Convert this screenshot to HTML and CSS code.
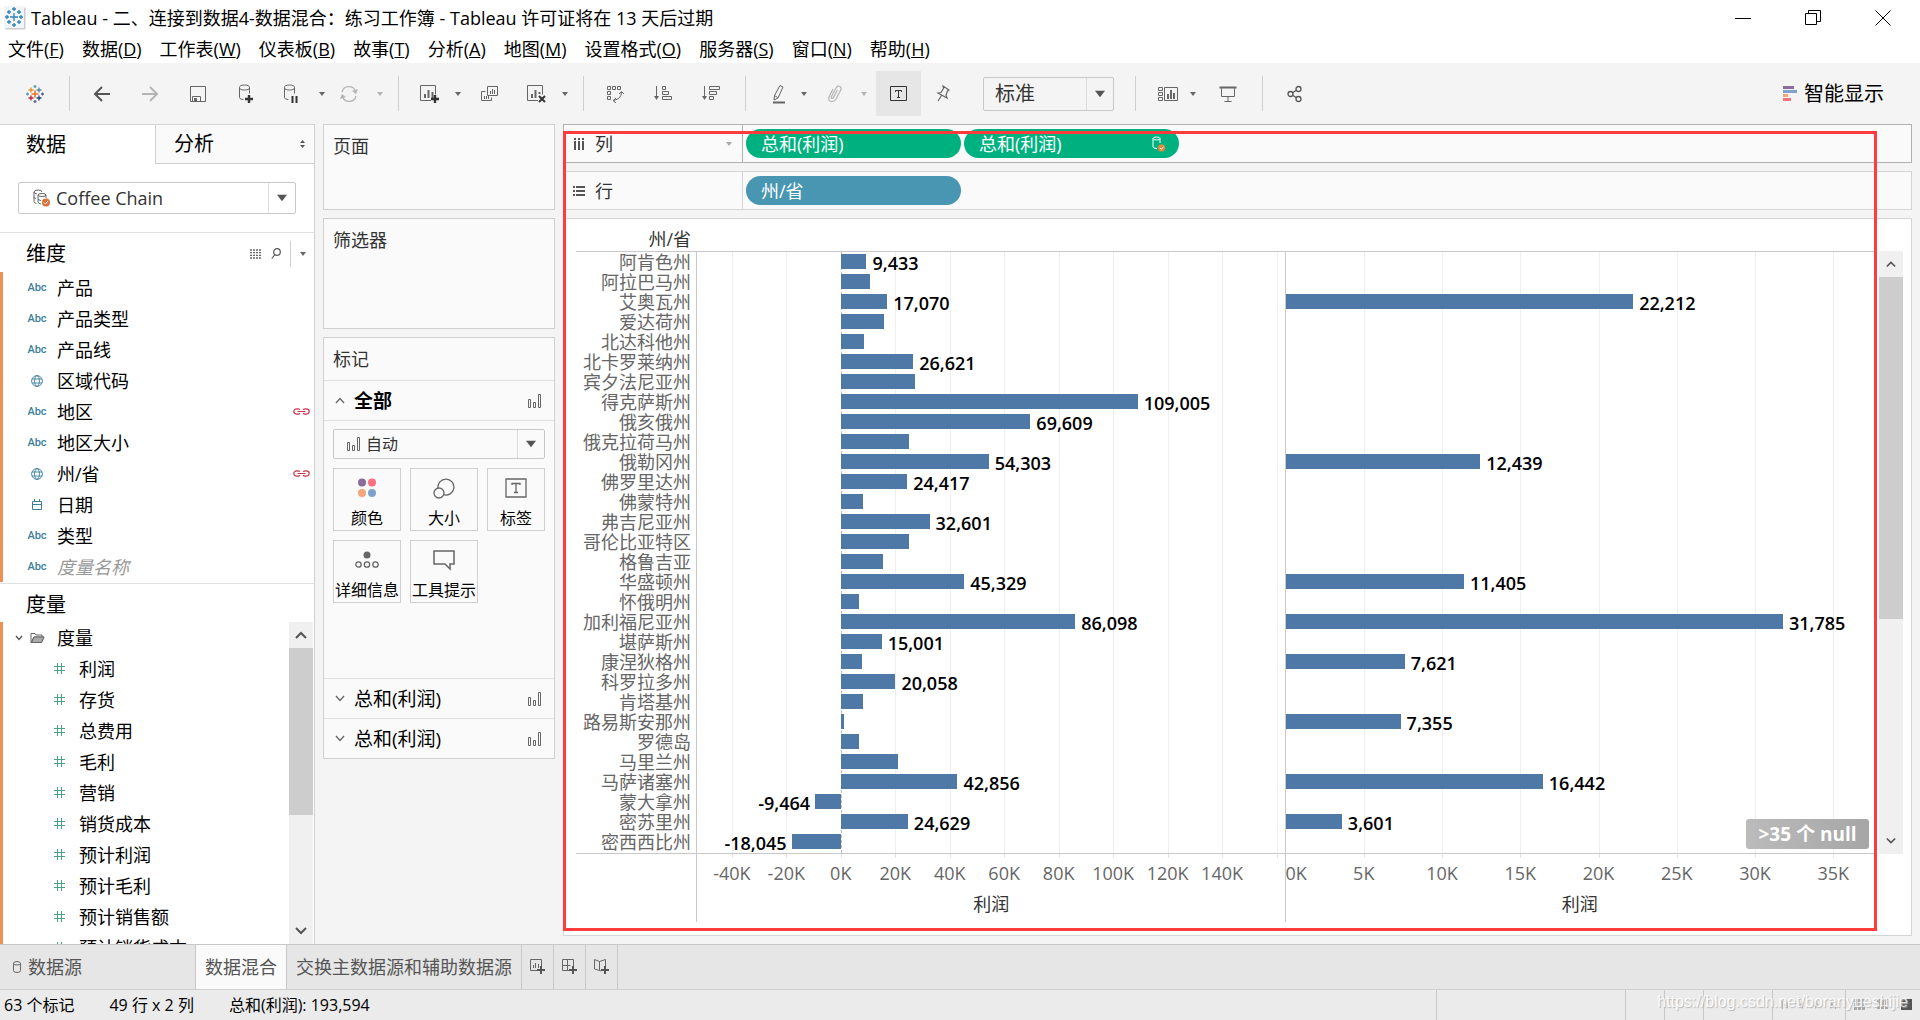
FILE: index.html
```html
<!DOCTYPE html>
<html lang="zh-CN">
<head>
<meta charset="utf-8">
<title>Tableau - 二、连接到数据4-数据混合：练习工作簿</title>
<link rel="stylesheet" href="styles.css">
</head>
<body>
<svg class="defs" aria-hidden="true">
  <symbol id="i-bars" viewBox="0 0 14 14"><path d="M.5 5.500h2v8h-2zM5.500 8.500h2v5h-2zM10.500 .5h2v13h-2z" fill="none" stroke="#666"/></symbol>
  <symbol id="i-globe" viewBox="0 0 12 12"><g fill="none" stroke="#3a7f9c" stroke-width=".9"><circle cx="6" cy="6" r="5.400"/><ellipse cx="6" cy="6" rx="2.400" ry="5.400"/><path d="M1 4h10M1 8h10"/></g></symbol>
  <symbol id="i-hash" viewBox="0 0 11 11"><path d="M3.500 0v11M7.500 0v11M0 3.500h11M0 7.500h11" fill="none" stroke="#4aa284"/></symbol>
  <symbol id="i-link" viewBox="0 0 17 7"><path d="M7 1.500Q6 .8 4 .8C2 .8 .8 2 .8 3.500S2 6.200 4 6.200 6 6 7 5.200M10 1.500Q11 .8 13 .8c2 0 3.200 1.200 3.200 2.700S15 6.200 13 6.200 11 6 10 5.200M4.500 3.500h8" fill="none" stroke="#c8364c" stroke-width="1.200"/></symbol>
  <symbol id="i-caret" viewBox="0 0 6 4"><path d="M0 0h6L3 4z" fill="currentColor"/></symbol>
  <symbol id="i-up" viewBox="0 0 12 8"><path d="M1 7l5-5 5 5" fill="none" stroke="currentColor" stroke-width="2"/></symbol>
  <symbol id="i-down" viewBox="0 0 12 8"><path d="M1 1l5 5 5-5" fill="none" stroke="currentColor" stroke-width="2"/></symbol>
  <symbol id="i-plus" viewBox="0 0 8 8"><path d="M4 0v8M0 4h8" stroke="#333" stroke-width="2.400"/></symbol>
</svg>

<header class="titlebar">
  <svg class="app-icon" width="22" height="24" viewBox="0 0 22 24"><rect x="1.500" y="1.500" width="20" height="22" fill="#ccc"/><rect width="20" height="22" fill="#f2f5f8"/><g stroke="#2e84b8" stroke-width="1.300"><path d="M10 7v8M6 11h8M10 1v4M8 3h4M10 17v4M8 19h4M1 11h4M3 9v4M15 11h4M17 9v4M5 4v4M3 6h4M15 4v4M13 6h4M5 14v4M3 16h4M15 14v4M13 16h4"/></g></svg>
  <h1 class="title">Tableau - 二、连接到数据4-数据混合：练习工作簿 - Tableau 许可证将在 13 天后过期</h1>
  <div class="window-buttons">
    <button aria-label="最小化"><svg width="16" height="16"><path d="M0 8.500h16" stroke="#000"/></svg></button>
    <button aria-label="还原"><svg width="16" height="16" fill="none" stroke="#000"><path d="M.5 3.500h11v11H.5zM3.500 3.500v-3h12v11h-4"/></svg></button>
    <button aria-label="关闭"><svg width="16" height="16"><path d="M.5 .5l15 15M15.500 .5l-15 15" stroke="#000"/></svg></button>
  </div>
</header>

<nav class="menu">
  <button>文件(<u>F</u>)</button><button>数据(<u>D</u>)</button><button>工作表(<u>W</u>)</button><button>仪表板(<u>B</u>)</button><button>故事(<u>T</u>)</button><button>分析(<u>A</u>)</button><button>地图(<u>M</u>)</button><button>设置格式(<u>O</u>)</button><button>服务器(<u>S</u>)</button><button>窗口(<u>N</u>)</button><button>帮助(<u>H</u>)</button>
</nav>

<div class="toolbar">
  <button aria-label="开始页"><svg width="18" height="18" viewBox="0 0 18 18" stroke-width="1.300"><path d="M9 5.500v7M5.500 9h7" stroke="#e8762c" stroke-width="1.600"/><path d="M5 2.500v5M2.500 5h5" stroke="#eb912c"/><path d="M13 2.500v5M10.500 5h5" stroke="#59879b"/><path d="M5 10.500v5M2.500 13h5" stroke="#c72035"/><path d="M13 10.500v5M10.500 13h5" stroke="#1f457e"/><path d="M9 0v3M7.500 1.500h3M1.500 7.500v3M0 9h3" stroke="#59a0b4"/><path d="M16.500 7.500v3M15 9h3M9 15v3M7.500 16.500h3" stroke="#5b6591"/></svg></button>
  <i class="sep"></i>
  <button aria-label="撤消"><svg width="18" height="16" fill="none" stroke="#555" stroke-width="2"><path d="M9 1L2 8l7 7M2 8h15"/></svg></button>
  <button aria-label="重做"><svg width="18" height="16" fill="none" stroke="#b4b4b4" stroke-width="2"><path d="M9 1l7 7-7 7M16 8H1"/></svg></button>
  <button aria-label="保存"><svg width="16" height="16" fill="none" stroke="#666"><path d="M.5 .5h15v15H.5zM2.500 15.500v-5h8v5"/><path d="M4 12h3v3H4z" fill="#666" stroke="none"/></svg></button>
  <button aria-label="新建数据源"><svg width="16" height="20" fill="none" stroke="#666"><ellipse cx="6.500" cy="3.500" rx="5" ry="2.500"/><path d="M1.500 3.500v10q0 2 4 2M11.500 3.500v6"/><use href="#i-plus" x="7" y="11" width="8" height="8"/></svg></button>
  <button aria-label="暂停自动更新"><svg width="16" height="20" fill="none" stroke="#666"><ellipse cx="7.500" cy="3.500" rx="5" ry="2.500"/><path d="M2.500 3.500v10q0 2 4 2M12.500 3.500v6"/><path d="M10.500 12v7M14.500 12v7" stroke="#333" stroke-width="2"/></svg></button>
  <button aria-label="更新选项"><svg class="caret"><use href="#i-caret"/></svg></button>
  <button aria-label="运行更新"><svg width="18" height="18" fill="none" stroke="#b4b4b4" stroke-width="1.300"><path d="M2 7a7 7 0 0 1 13.500-.5M16 11a7 7 0 0 1-13.500.5"/><path d="M18 4l-2 5-4-3zM0 14l2-5 4 3z" fill="#b4b4b4" stroke="none"/></svg></button>
  <button class="off" aria-label="运行选项"><svg class="caret"><use href="#i-caret"/></svg></button>
  <i class="sep"></i>
  <button aria-label="新建工作表"><svg width="20" height="20" fill="none" stroke="#666"><path d="M11 16.500H.5V1.500h15v9"/><path d="M5 10v4M8.500 6v8M12.500 8v6" stroke-width="2"/><use href="#i-plus" x="11" y="11" width="8" height="8"/></svg></button>
  <button aria-label="工作表选项"><svg class="caret"><use href="#i-caret"/></svg></button>
  <button aria-label="复制"><svg width="18" height="18" fill="none" stroke="#666"><path d="M6.500 1.500h10v9h-10zM4.500 6.500h-4v9h10v-3"/><path d="M9.500 6v3M11.500 4v5M13.500 5v4M3.500 11v3M5.500 11v3M7.500 11v3"/></svg></button>
  <button aria-label="清除工作表"><svg width="20" height="20" fill="none" stroke="#666"><path d="M11 16.500H.5V1.500h15v9"/><path d="M5 10v4M8.500 6v8M12.500 8v2" stroke-width="2"/><path d="M12 12l6 6M18 12l-6 6" stroke="#333" stroke-width="2"/></svg></button>
  <button aria-label="清除选项"><svg class="caret"><use href="#i-caret"/></svg></button>
  <i class="sep"></i>
  <button aria-label="交换行和列"><svg width="18" height="18" fill="none" stroke="#666"><path d="M1.500 1.500h3v3h-3zM6.500 1.500h3v3h-3zM11.500 1.500h3v3h-3zM1.500 6.500h3v3h-3zM1.500 11.500h3v3h-3zM15.500 7q0 7-8 8.500M13 9l2.500-2.500L18 9M10 13l-3 2.500L10 18"/></svg></button>
  <button aria-label="升序排序"><svg width="18" height="18" fill="none" stroke="#666"><path d="M2.500 1v12M8.500 1.500h3v3h-3zM8.500 6.500h6v3h-6zM8.500 11.500h9v3h-9z"/><path d="M0 11h5l-2.500 4z" fill="#666" stroke="none"/></svg></button>
  <button aria-label="降序排序"><svg width="18" height="18" fill="none" stroke="#666"><path d="M2.500 1v12M7.500 1.500h10v3h-10zM7.500 6.500h7v3h-7zM7.500 11.500h4v3h-4z"/><path d="M0 11h5l-2.500 4z" fill="#666" stroke="none"/></svg></button>
  <i class="sep"></i>
  <button aria-label="突出显示"><svg width="14" height="20" fill="none" stroke="#666"><path d="M8 1.500l3 1.500-5 11-4 2 .5-4.500zM2.500 11.500l3 2"/><path d="M1 18.500h12" stroke-width="2"/></svg></button>
  <button aria-label="突出显示选项"><svg class="caret"><use href="#i-caret"/></svg></button>
  <button aria-label="组成员"><svg width="14" height="18" fill="none" stroke="#b4b4b4" stroke-width="1.200"><path d="M9.500 5L5 13q-1.500 1-2-.5L8 3q2-3 4-1.500t.5 4L8 14q-2 3-5 2.500T1 12l4-8"/></svg></button>
  <button class="off" aria-label="组选项"><svg class="caret"><use href="#i-caret"/></svg></button>
  <button class="pressed" aria-label="显示标记标签" aria-pressed="true"><svg width="18" height="16" fill="none" stroke="#333"><path d="M.5 .5h16v14H.5z"/><path d="M5.500 6V4.500h6V6M8.500 4.500v7M7 11.500h3"/></svg></button>
  <button aria-label="固定轴"><svg width="14" height="18" fill="none" stroke="#666" stroke-width="1.200"><path d="M7 1l6 4-1.500 1L10 10l1 3-9-5 3-.5 2.500-4zM5.500 10.500L2 16"/></svg></button>
  <span class="combo fit"><select aria-label="适合"><option>标准</option></select><svg class="arrow"><use href="#i-caret"/></svg></span>
  <i class="sep"></i>
  <button aria-label="显示/隐藏卡"><svg width="20" height="16" fill="none" stroke="#666"><path d="M.5 1.500h4v3h-4zM.5 6.500h4v3h-4zM.5 11.500h4v3h-4zM6.500 1.500h13v13h-13z"/><path d="M10 8v5M13 4v9M16 7v6" stroke-width="2"/></svg></button>
  <button aria-label="卡选项"><svg class="caret"><use href="#i-caret"/></svg></button>
  <button aria-label="演示模式"><svg width="18" height="18" fill="none" stroke="#666"><path d="M.5 2.500h17" stroke-width="2"/><path d="M2.500 3v8.500h13V3M9 11.500v5M5.500 16.500h7"/></svg></button>
  <i class="sep"></i>
  <button aria-label="共享"><svg width="16" height="18" fill="none" stroke="#555" stroke-width="1.300"><circle cx="3.500" cy="9" r="2.500"/><circle cx="11.500" cy="4" r="2.500"/><circle cx="11.500" cy="14" r="2.500"/><path d="M5.500 7.700l4-2.400M5.500 10.300l4 2.400"/></svg></button>
  <button class="showme"><svg width="14" height="16"><path fill="#8a6d9b" d="M0 0h11v3H0z"/><path fill="#7fa2cc" d="M0 4h14v3H0z"/><path fill="#f2a679" d="M0 8h5v3H0z"/><path fill="#f9707f" d="M0 12h8v3H0z"/></svg>智能显示</button>
</div>

<main class="main">
  <section class="data-pane">
    <div class="pane-tabs"><button class="active">数据</button><button>分析<svg width="5" height="8"><path d="M0 3h5L2.500 0zM0 5h5L2.500 8z" fill="#555"/></svg></button></div>
    <div class="source">
      <span class="combo">
        <svg class="lead" width="18" height="18" fill="none" stroke="#666"><path d="M3.500 14.500q-2.500-.5-2.500-2V3q0-2 4-2t4 2M1 3q0 1.500 3 2M1 8q0 1 2 1.500"/><path d="M5 6q0-1.500 4-1.500T13 6v3M5 6q0 1.500 4 1.500T13 6M5 6v7q0 1.500 3 2M5 10q0 1 3 1.500"/><circle cx="13" cy="13.500" r="4" fill="#d9713a" stroke="none"/><path d="M11 13.500l1.500 1.500 2.500-3" stroke="#fff"/></svg>
        <select aria-label="数据源"><option>Coffee Chain</option></select><svg class="arrow"><use href="#i-caret"/></svg></span>
    </div>
    <div class="field-head">
      <h2>维度</h2>
      <svg width="12" height="10"><path d="M0 1h12M0 3.700h12M0 6.400h12M0 9h12" stroke="#666" stroke-width="1.300" stroke-dasharray="2 1"/></svg>
      <svg width="10" height="12" fill="none" stroke="#555" stroke-width="1.200"><circle cx="6" cy="4" r="3.300"/><path d="M4 6.500L.8 10.500"/></svg>
      <i class="sep small"></i>
      <svg class="caret"><use href="#i-caret"/></svg>
    </div>
    <ul class="fields">
      <li><span class="abc">Abc</span>产品</li>
      <li><span class="abc">Abc</span>产品类型</li>
      <li><span class="abc">Abc</span>产品线</li>
      <li><span class="abc"><svg width="12" height="12"><use href="#i-globe"/></svg></span>区域代码</li>
      <li><span class="abc">Abc</span>地区<svg class="link" width="17" height="7"><use href="#i-link"/></svg></li>
      <li><span class="abc">Abc</span>地区大小</li>
      <li><span class="abc"><svg width="12" height="12"><use href="#i-globe"/></svg></span>州/省<svg class="link" width="17" height="7"><use href="#i-link"/></svg></li>
      <li><span class="abc"><svg width="12" height="12" fill="none" stroke="#3a7f9c"><path d="M1.500 2.500h9v8h-9zM1.500 5.500h9M3.500 0v3M8.500 0v3"/></svg></span>日期</li>
      <li><span class="abc">Abc</span>类型</li>
      <li class="generated"><span class="abc">Abc</span>度量名称</li>
    </ul>
    <div class="field-head measures-head"><h2>度量</h2></div>
    <div class="measures">
      <ul class="fields">
        <li class="folder"><svg width="8" height="6" fill="none" stroke="#555" stroke-width="1.300"><path d="M1 1l3 3.500L7 1"/></svg><svg width="15" height="12" fill="none" stroke="#666"><path d="M1 10.500v-9h4l1 1.500h6v2M1 10.500h10.500l2.500-5.500H4z"/><path d="M4 5h10l-2.500 5.500H1.500z" fill="#aaa"/></svg>度量</li>
        <li class="num"><svg width="11" height="11"><use href="#i-hash"/></svg>利润</li>
        <li class="num"><svg width="11" height="11"><use href="#i-hash"/></svg>存货</li>
        <li class="num"><svg width="11" height="11"><use href="#i-hash"/></svg>总费用</li>
        <li class="num"><svg width="11" height="11"><use href="#i-hash"/></svg>毛利</li>
        <li class="num"><svg width="11" height="11"><use href="#i-hash"/></svg>营销</li>
        <li class="num"><svg width="11" height="11"><use href="#i-hash"/></svg>销货成本</li>
        <li class="num"><svg width="11" height="11"><use href="#i-hash"/></svg>预计利润</li>
        <li class="num"><svg width="11" height="11"><use href="#i-hash"/></svg>预计毛利</li>
        <li class="num"><svg width="11" height="11"><use href="#i-hash"/></svg>预计销售额</li>
        <li class="num"><svg width="11" height="11"><use href="#i-hash"/></svg>预计销货成本</li>
      </ul>
      <div class="scrollbar"><svg width="12" height="26"><use href="#i-up" width="12" height="8" y="9"/></svg><div class="track"><i></i></div><svg width="12" height="26"><use href="#i-down" width="12" height="8" y="9"/></svg></div>
    </div>
  </section>

  <section class="cards">
    <div class="card pages">页面</div>
    <div class="card filters">筛选器</div>
    <div class="card marks">
      <div class="marks-title">标记</div>
      <div class="mark-row all"><svg width="10" height="7" fill="none" stroke="#666" stroke-width="1.300"><path d="M1 6l4-4.500L9 6"/></svg><b>全部</b><svg width="14" height="14"><use href="#i-bars"/></svg></div>
      <div class="mark-body">
        <span class="combo"><svg class="lead" width="14" height="14"><use href="#i-bars"/></svg><select aria-label="标记类型"><option>自动</option></select><svg class="arrow"><use href="#i-caret"/></svg></span>
        <div class="mark-buttons">
          <button><svg width="22" height="22"><circle cx="6" cy="5.500" r="4" fill="#8a6d9b"/><circle cx="16" cy="5.500" r="4" fill="#f9707f"/><circle cx="6" cy="16" r="4" fill="#f2a679"/><circle cx="16" cy="16" r="4" fill="#7fa2cc"/></svg>颜色</button>
          <button><svg width="22" height="22" fill="none" stroke="#666" stroke-width="1.300"><path d="M5 11.200a8 8 0 1 1 5.500 6.500"/><circle cx="6" cy="16" r="5"/></svg>大小</button>
          <button><svg width="22" height="22" fill="none" stroke="#666" stroke-width="1.300"><path d="M1 2h20v18H1z"/><path d="M7 8V6.500h8V8M11 6.500v9M9 15.500h4"/></svg>标签</button>
          <button><svg width="24" height="22" fill="none" stroke="#666" stroke-width="1.300"><circle cx="12" cy="6" r="3.500" fill="#666" stroke="none"/><circle cx="3.500" cy="15.500" r="2.700"/><circle cx="12" cy="15.500" r="2.700"/><circle cx="20.500" cy="15.500" r="2.700"/></svg>详细信息</button>
          <button><svg width="22" height="22" fill="none" stroke="#666" stroke-width="1.500"><path d="M1 2h20v13h-4v5l-5-5H1z"/></svg>工具提示</button>
        </div>
      </div>
      <div class="mark-row"><svg width="10" height="7" fill="none" stroke="#666" stroke-width="1.300"><path d="M1 1l4 4.500L9 1"/></svg><span>总和(利润)</span><svg width="14" height="14"><use href="#i-bars"/></svg></div>
      <div class="mark-row"><svg width="10" height="7" fill="none" stroke="#666" stroke-width="1.300"><path d="M1 1l4 4.500L9 1"/></svg><span>总和(利润)</span><svg width="14" height="14"><use href="#i-bars"/></svg></div>
    </div>
  </section>

  <section class="work">
    <div class="shelf focus">
      <div class="shelf-head"><svg width="12" height="12" stroke="#555" stroke-width="2"><path d="M2 0v2M6 0v2M10 0v2M2 3v9M6 3v9M10 3v9"/></svg>列<svg class="caret"><use href="#i-caret"/></svg></div>
      <button class="pill green">总和(利润)</button>
      <button class="pill green">总和(利润)<svg width="14" height="16" fill="none" stroke="#fff"><path d="M5 12.500q-4-.3-4-1.500V2.500Q1 1 4.500 1T8 2.500V7M1 2.500Q1 4 4.500 4T8 2.500"/><circle cx="9.500" cy="12" r="3.700" fill="#d98a45" stroke="none"/><path d="M8 12l1.200 1.300L11.500 11"/></svg></button>
    </div>
    <div class="shelf">
      <div class="shelf-head"><svg width="12" height="12" stroke="#555" stroke-width="2"><path d="M0 2h2M0 6h2M0 10h2M3 2h9M3 6h9M3 10h9"/></svg>行</div>
      <button class="pill blue">州/省</button>
    </div>
    <div class="canvas">
      <div class="chart">
        <div class="row-title">州/省</div>
        <div class="body">
          <div class="grid grid-a"></div>
          <div class="grid grid-b"></div>
          <div class="rows"></div>
          <button class="nulls">&gt;35 个 null</button>
        </div>
        <div class="axes">
          <div class="axis-corner"></div>
          <div class="axis axis-a"><div class="ticks"></div>利润</div>
          <div class="axis axis-b"><div class="ticks"></div>利润</div>
        </div>
      </div>
      <div class="scrollbar"><svg width="12" height="26"><use href="#i-up" width="10" height="8" x="1" y="9"/></svg><div class="track"><i></i></div><svg width="12" height="26"><use href="#i-down" width="10" height="8" x="1" y="9"/></svg></div>
    </div>
    <div class="highlight-frame"></div>
  </section>
</main>

<nav class="sheets">
  <button class="ds"><svg width="8" height="13" fill="none" stroke="#666"><path d="M.5 2.500q0-2 3.500-2t3.500 2v7q0 2-3.500 2t-3.500-2zM.5 2.500q0 1.500 3.500 1.500t3.500-1.500"/></svg>数据源</button>
  <button class="active">数据混合</button>
  <button>交换主数据源和辅助数据源</button>
  <button class="add" aria-label="新建工作表"><svg width="16" height="16" fill="none" stroke="#666"><path d="M8 11.500H.5V.5h11v7M3.500 6v3M5.500 4v5M8.500 5v4"/><path d="M11 7v8M7 11h8" stroke="#555" stroke-width="2"/></svg></button>
  <button class="add" aria-label="新建仪表板"><svg width="16" height="16" fill="none" stroke="#666"><path d="M8 11.500H.5V.5h11v7M.5 6.500h8M5.500 .5v11"/><path d="M11 7v8M7 11h8" stroke="#555" stroke-width="2"/></svg></button>
  <button class="add" aria-label="新建故事"><svg width="16" height="16" fill="none" stroke="#666"><path d="M7 12L5.500 11.500 .5 10V.5L5.500 2.500 11.500 .5v7M5.500 2.500v9"/><path d="M11 7v8M7 11h8" stroke="#555" stroke-width="2"/></svg></button>
</nav>

<footer class="status">
  <span>63 个标记</span><span>49 行 x 2 列</span><span>总和(利润): 193,594</span>
  <div class="cells"><i></i><i></i><i></i><i></i>
    <i><svg width="56" height="10" fill="#b5b5b5"><path d="M1 1h1v8H1zM7 1v8L3 5zM22 1v8l-4-4zM34 1v8l4-4zM49 1v8l4-4zM54 1h1v8h-1z"/></svg></i>
    <i><svg width="58" height="12"><path d="M0 1.500h11M0 5.500h11M0 9.500h11M23 1.500h11M23 4.500h11M23 8.500h11" stroke="#aaa" stroke-width="3" stroke-dasharray="3 1"/><path d="M47 0h11v11H47z" fill="#555"/></svg></i>
  </div>
  <span class="watermark">https://blog.csdn.net/boranyueshijie</span>
</footer>
<script src="chart.js"></script>
</body>
</html>
```
FILE: styles.css
```css
* { box-sizing: border-box; }
body {
  margin: 0; height: 100vh; display: flex; flex-direction: column; overflow: hidden;
  font: 18px/24px "Open Sans", "Noto Sans CJK SC", sans-serif; color: #000; background: #fff;
}
button, select { font: inherit; color: inherit; border: 0; background: none; padding: 0; margin: 0; white-space: nowrap; }
ul { list-style: none; margin: 0; padding: 0; }
h1, h2 { margin: 0; font: inherit; }
svg { flex: none; display: block; }
.defs { position: absolute; width: 0; height: 0; }
.caret { width: 6px; height: 4px; color: #666; }
.off .caret { color: #b4b4b4; }
.sep { width: 1px; height: 35px; background: #cfcfcf; }

.titlebar { height: 35px; flex: none; display: flex; align-items: center; padding: 0 2px 0 4px; gap: 5px; }
.title { flex: 1; white-space: nowrap; }
.window-buttons { display: flex; }
.window-buttons button { width: 70px; height: 34px; display: grid; place-items: center; }

.menu { height: 28px; flex: none; display: flex; gap: 18px; padding-left: 8px; align-items: center; }

.toolbar {
  height: 61px; flex: none; background: #f4f4f4; display: grid; align-items: center; justify-items: center;
  grid-template-columns: 69px 1px 64px 32px 64px 32px 56px 8px 46px 16px 21px 42px 14px 50px 44px 12px 25px 38px 58px 38px 31px 36px 14px 48px 10px 59px 30px 156px 43px 22px 28px 42px 27px 38px 1fr;
  padding-right: 36px;
}
.toolbar .pressed { width: 45px; height: 45px; background: #e6e6e6; display: grid; place-items: center; }
.toolbar .showme { display: flex; align-items: center; gap: 7px; font-size: 20px; justify-self: end; }

.combo { display: flex; position: relative; border: 1px solid #c8c8c8; border-radius: 2px; align-items: center; background: inherit; }
.combo select { appearance: none; width: 100%; height: 100%; padding-left: 11px; color: #333; }
.combo .lead { position: absolute; left: 14px; }
.combo .arrow { position: absolute; right: 0; width: 27px; height: 100%; padding: 0 8px; border-left: 1px solid #dcdcdc; color: #555; pointer-events: none; }
.fit { width: 131px; height: 34px; justify-self: end; font-size: 20px; }

.main { flex: 1; min-height: 0; display: flex; gap: 8px; background: #f4f4f4; padding-right: 8px; }

.data-pane { width: 315px; flex: none; display: flex; flex-direction: column; background: #fff; border-right: 1px solid #d0d0d0; border-top: 1px solid #d4d4d4; }
.pane-tabs { display: grid; grid-template-columns: 155px 1fr; height: 39px; font-size: 20px; }
.pane-tabs button { text-align: left; padding-left: 26px; }
.pane-tabs button + button { display: flex; justify-content: space-between; align-items: center; padding: 0 9px 0 18px; background: #fafafa; border-left: 1px solid #d0d0d0; border-bottom: 1px solid #d0d0d0; }
.source { padding: 18px; height: 69px; border-bottom: 1px solid #e0e0e0; }
.source .combo { height: 32px; }
.source .combo select { padding-left: 37px; }
.field-head { height: 39px; flex: none; display: flex; align-items: center; padding: 3px 8px 0 26px; gap: 9px; }
.field-head h2 { font-size: 20px; flex: 1; }
.sep.small { height: 26px; }
.fields { border-left: 3px solid #ed9150; }
.fields li { height: 31px; display: flex; align-items: center; padding-left: 24px; white-space: nowrap; }
.abc { width: 20px; margin-right: 10px; display: grid; place-items: center; font: 500 11px/16px Roboto, sans-serif; color: #3a7f9c; }
.link { margin-left: auto; margin-right: 4px; }
.generated { font-style: italic; color: #999; }
.generated .abc { font-style: normal; }
.measures-head { border-top: 1px solid #e0e0e0; margin-top: 1px; height: 39px; }
.measures { flex: 1; min-height: 0; display: flex; overflow: hidden; padding-right: 1px; }
.measures .fields { flex: 1; }
.fields li.folder { padding-left: 12px; gap: 7px; }
.folder svg + svg { margin-right: 5px; }
.fields li.num { padding-left: 51px; gap: 14px; }

.scrollbar { width: 24px; flex: none; background: #f0f0f0; display: flex; flex-direction: column; align-items: center; color: #555; }
.track { flex: 1; width: 24px; }
.track i { display: block; height: 62%; background: #cdcdcd; }

.cards { width: 232px; flex: none; display: flex; flex-direction: column; gap: 8px; color: #333; }
.card { background: #fafafa; border: 1px solid #d0d0d0; padding: 9px; }
.pages { height: 86px; }
.filters { height: 111px; }
.marks { padding: 0; height: 422px; display: flex; flex-direction: column; }
.marks-title { height: 42px; padding: 9px; }
.mark-row { height: 40px; border-top: 1px solid #e0e0e0; display: flex; align-items: center; gap: 9px; padding: 0 12px 0 11px; color: #000; }
.mark-row b, .mark-row span { flex: 1; font-size: 19px; }
.mark-body { flex: 1; border-top: 1px solid #e0e0e0; padding: 8px 9px; font-size: 16px; }
.mark-body .combo { height: 30px; }
.mark-body .combo select { padding-left: 32px; }
.mark-body .combo .lead { left: 13px; }
.mark-buttons { display: grid; grid-template-columns: 68px 68px 58px; gap: 9px; margin-top: 9px; }
.mark-buttons button { height: 63px; border: 1px solid #d0d0d0; display: flex; flex-direction: column; align-items: center; justify-content: space-between; padding: 8px 0 0; color: #000; }

.work { flex: 1; min-width: 0; display: flex; flex-direction: column; gap: 8px; padding-bottom: 8px; position: relative; }
.shelf { height: 39px; flex: none; display: flex; align-items: center; gap: 3px; background: #fafafa; border: 1px solid #d4d4d4; }
.shelf.focus { border-color: #b0b0b0; }
.shelf-head { width: 179px; height: 100%; border-right: 1px solid #d4d4d4; display: flex; align-items: center; gap: 10px; padding: 0 10px 0 9px; color: #333; }
.focus .shelf-head { border-color: #b0b0b0; }
.shelf-head .caret { margin-left: auto; color: #aaa; }
.pill { width: 215px; height: 29px; border-radius: 15px; color: #fff; text-align: left; padding: 0 13px 0 15px; display: flex; align-items: center; justify-content: space-between; }
.green { background: #00b180; }
.blue { background: #4996b2; }
.canvas { flex: 1; min-height: 0; background: #fff; border: 1px solid #d4d4d4; display: flex; gap: 5px; padding: 0 8px 0 12px; }
.canvas > .scrollbar { margin: 32px 0 81px; }

.chart { flex: 1; min-width: 0; display: flex; flex-direction: column; }
.row-title { height: 32px; width: 115px; text-align: right; padding-top: 8px; color: #333; }
.body { flex: 1; min-height: 0; position: relative; overflow: hidden; border-top: 1px solid #c8c8c8; border-bottom: 1px solid #c8c8c8; display: grid; grid-template-columns: 121px 1fr 1fr; }
.grid { position: relative; grid-row: 1; border-left: 1px solid #c8c8c8; margin-left: -1px; }
.grid-a { grid-column: 2; }
.grid-b { grid-column: 3; }
.line { position: absolute; top: 0; bottom: 0; width: 1px; background: #efefef; }
.line.zero { background: none; border-left: 1px dashed #bbb; }
.rows { grid-row: 1; grid-column: 1 / 4; position: relative; height: 0; }
.row { height: 20px; display: grid; grid-template-columns: 121px 1fr 1fr; }
.state { text-align: right; padding-right: 6px; line-height: 20px; color: #666; white-space: nowrap; }
.plot { position: relative; }
.bar { position: absolute; top: 2px; height: 15px; background: #4e79a7; }
.value { position: absolute; left: 100%; top: -1px; padding: 0 6px; line-height: 20px; font-weight: 600; color: #000; }
.neg .value { left: auto; right: 100%; padding: 0 5px; }
.nulls { position: absolute; right: 5px; bottom: 4px; width: 123px; height: 30px; border-radius: 3px; background: linear-gradient(90deg, #bbb, #a6a6a6); color: #fff; font-weight: 700; font-size: 19px; }
.axes { height: 81px; flex: none; display: grid; grid-template-columns: 121px 1fr 1fr; padding-bottom: 13px; }
.axis { position: relative; border-left: 1px solid #c8c8c8; margin-left: -1px; text-align: center; padding-top: 38px; color: #333; }
.ticks { position: absolute; left: 0; right: 0; top: 0; height: 30px; color: #666; }
.tick { position: absolute; top: 7px; transform: translateX(-50%); }
.tick.edge { transform: none; }
.tick-mark { position: absolute; top: 0; height: 4px; width: 1px; background: #e4e4e4; }

.highlight-frame { position: absolute; top: 7px; left: 0; right: 35px; bottom: 13px; border: 3px solid #ff3b3b; pointer-events: none; }

.sheets { height: 46px; flex: none; display: flex; background: #e6e6e6; border-top: 1px solid #c8c8c8; border-bottom: 1px solid #d0d0d0; color: #555; }
.sheets button { padding: 0 9px; border-right: 1px solid #c8c8c8; }
.sheets .ds { width: 196px; padding-left: 13px; display: flex; gap: 7px; align-items: center; }
.sheets .active { background: #fafafa; }
.sheets .add { width: 32px; padding: 0; display: grid; place-items: center; }

.status { height: 30px; flex: none; background: #ebebeb; display: flex; align-items: center; gap: 35px; padding-left: 4px; font-size: 16px; position: relative; white-space: nowrap; }
.cells { margin-left: auto; height: 100%; display: grid; grid-template-columns: 189px 39px 39px 69px 73px 75px; }
.cells i { border-left: 1px solid #c8c8c8; display: grid; place-items: center; }
.watermark { position: absolute; right: 12px; top: 0; font: 16px/24px "Liberation Sans", sans-serif; color: #fff; opacity: .8; text-shadow: 1px 1px 1px #aaa; }
```
FILE: chart.js
```js
// State, primary-source profit, secondary-source profit, whether the primary mark is labelled
const data = [
  ["阿肯色州", 9433, 0, 1], ["阿拉巴马州", 10600, 0, 0], ["艾奥瓦州", 17070, 22212, 1],
  ["爱达荷州", 15800, 0, 0], ["北达科他州", 8700, 0, 0], ["北卡罗莱纳州", 26621, 0, 1],
  ["宾夕法尼亚州", 27200, 0, 0], ["得克萨斯州", 109005, 0, 1], ["俄亥俄州", 69609, 0, 1],
  ["俄克拉荷马州", 25200, 0, 0], ["俄勒冈州", 54303, 12439, 1], ["佛罗里达州", 24417, 0, 1],
  ["佛蒙特州", 8000, 0, 0], ["弗吉尼亚州", 32601, 0, 1], ["哥伦比亚特区", 25200, 0, 0],
  ["格鲁吉亚", 15400, 0, 0], ["华盛顿州", 45329, 11405, 1], ["怀俄明州", 6700, 0, 0],
  ["加利福尼亚州", 86098, 31785, 1], ["堪萨斯州", 15001, 0, 1], ["康涅狄格州", 7700, 7621, 0],
  ["科罗拉多州", 20058, 0, 1], ["肯塔基州", 8000, 0, 0], ["路易斯安那州", 1100, 7355, 0],
  ["罗德岛", 6700, 0, 0], ["马里兰州", 20900, 0, 0], ["马萨诸塞州", 42856, 16442, 1],
  ["蒙大拿州", -9464, 0, 1], ["密苏里州", 24629, 3601, 1], ["密西西比州", -18045, 0, 1],
  ["密歇根州", 0, 0, 0]
];

const scales = {
  a: { min: -52800, max: 163300, step: 20000, from: -40000, to: 160000, lastLabel: 140000 },
  b: { min: 0, max: 37600, step: 5000, from: 0, to: 35000, lastLabel: 35000 }
};
const pct = (s, v) => (v - s.min) / (s.max - s.min) * 100;

function bar(s, v, labelled) {
  if (!v) return "";
  const left = pct(s, Math.min(0, v));
  const width = pct(s, Math.max(0, v)) - left;
  const text = labelled ? `<span class="value">${v.toLocaleString("en-US")}</span>` : "";
  return `<div class="bar${v < 0 ? " neg" : ""}" style="left:${left}%;width:${width}%">${text}</div>`;
}

document.querySelector(".rows").innerHTML = data.map(([name, a, b, labelled]) =>
  `<div class="row"><div class="state">${name}</div><div class="plot">${bar(scales.a, a, labelled)}</div><div class="plot">${bar(scales.b, b, true)}</div></div>`
).join("");

for (const key of ["a", "b"]) {
  const s = scales[key];
  let lines = "", ticks = "";
  for (let v = s.from; v <= s.to; v += s.step) {
    const x = pct(s, v);
    if (x > 0) {
      lines += `<i class="line${v === 0 ? " zero" : ""}" style="left:${x}%"></i>`;
      ticks += `<i class="tick-mark" style="left:${x}%"></i>`;
    }
    if (v <= s.lastLabel) ticks += `<span class="tick${x > 0 ? "" : " edge"}" style="left:${x}%">${v / 1000}K</span>`;
  }
  document.querySelector(`.grid-${key}`).innerHTML = lines;
  document.querySelector(`.axis-${key} .ticks`).innerHTML = ticks;
}
```
